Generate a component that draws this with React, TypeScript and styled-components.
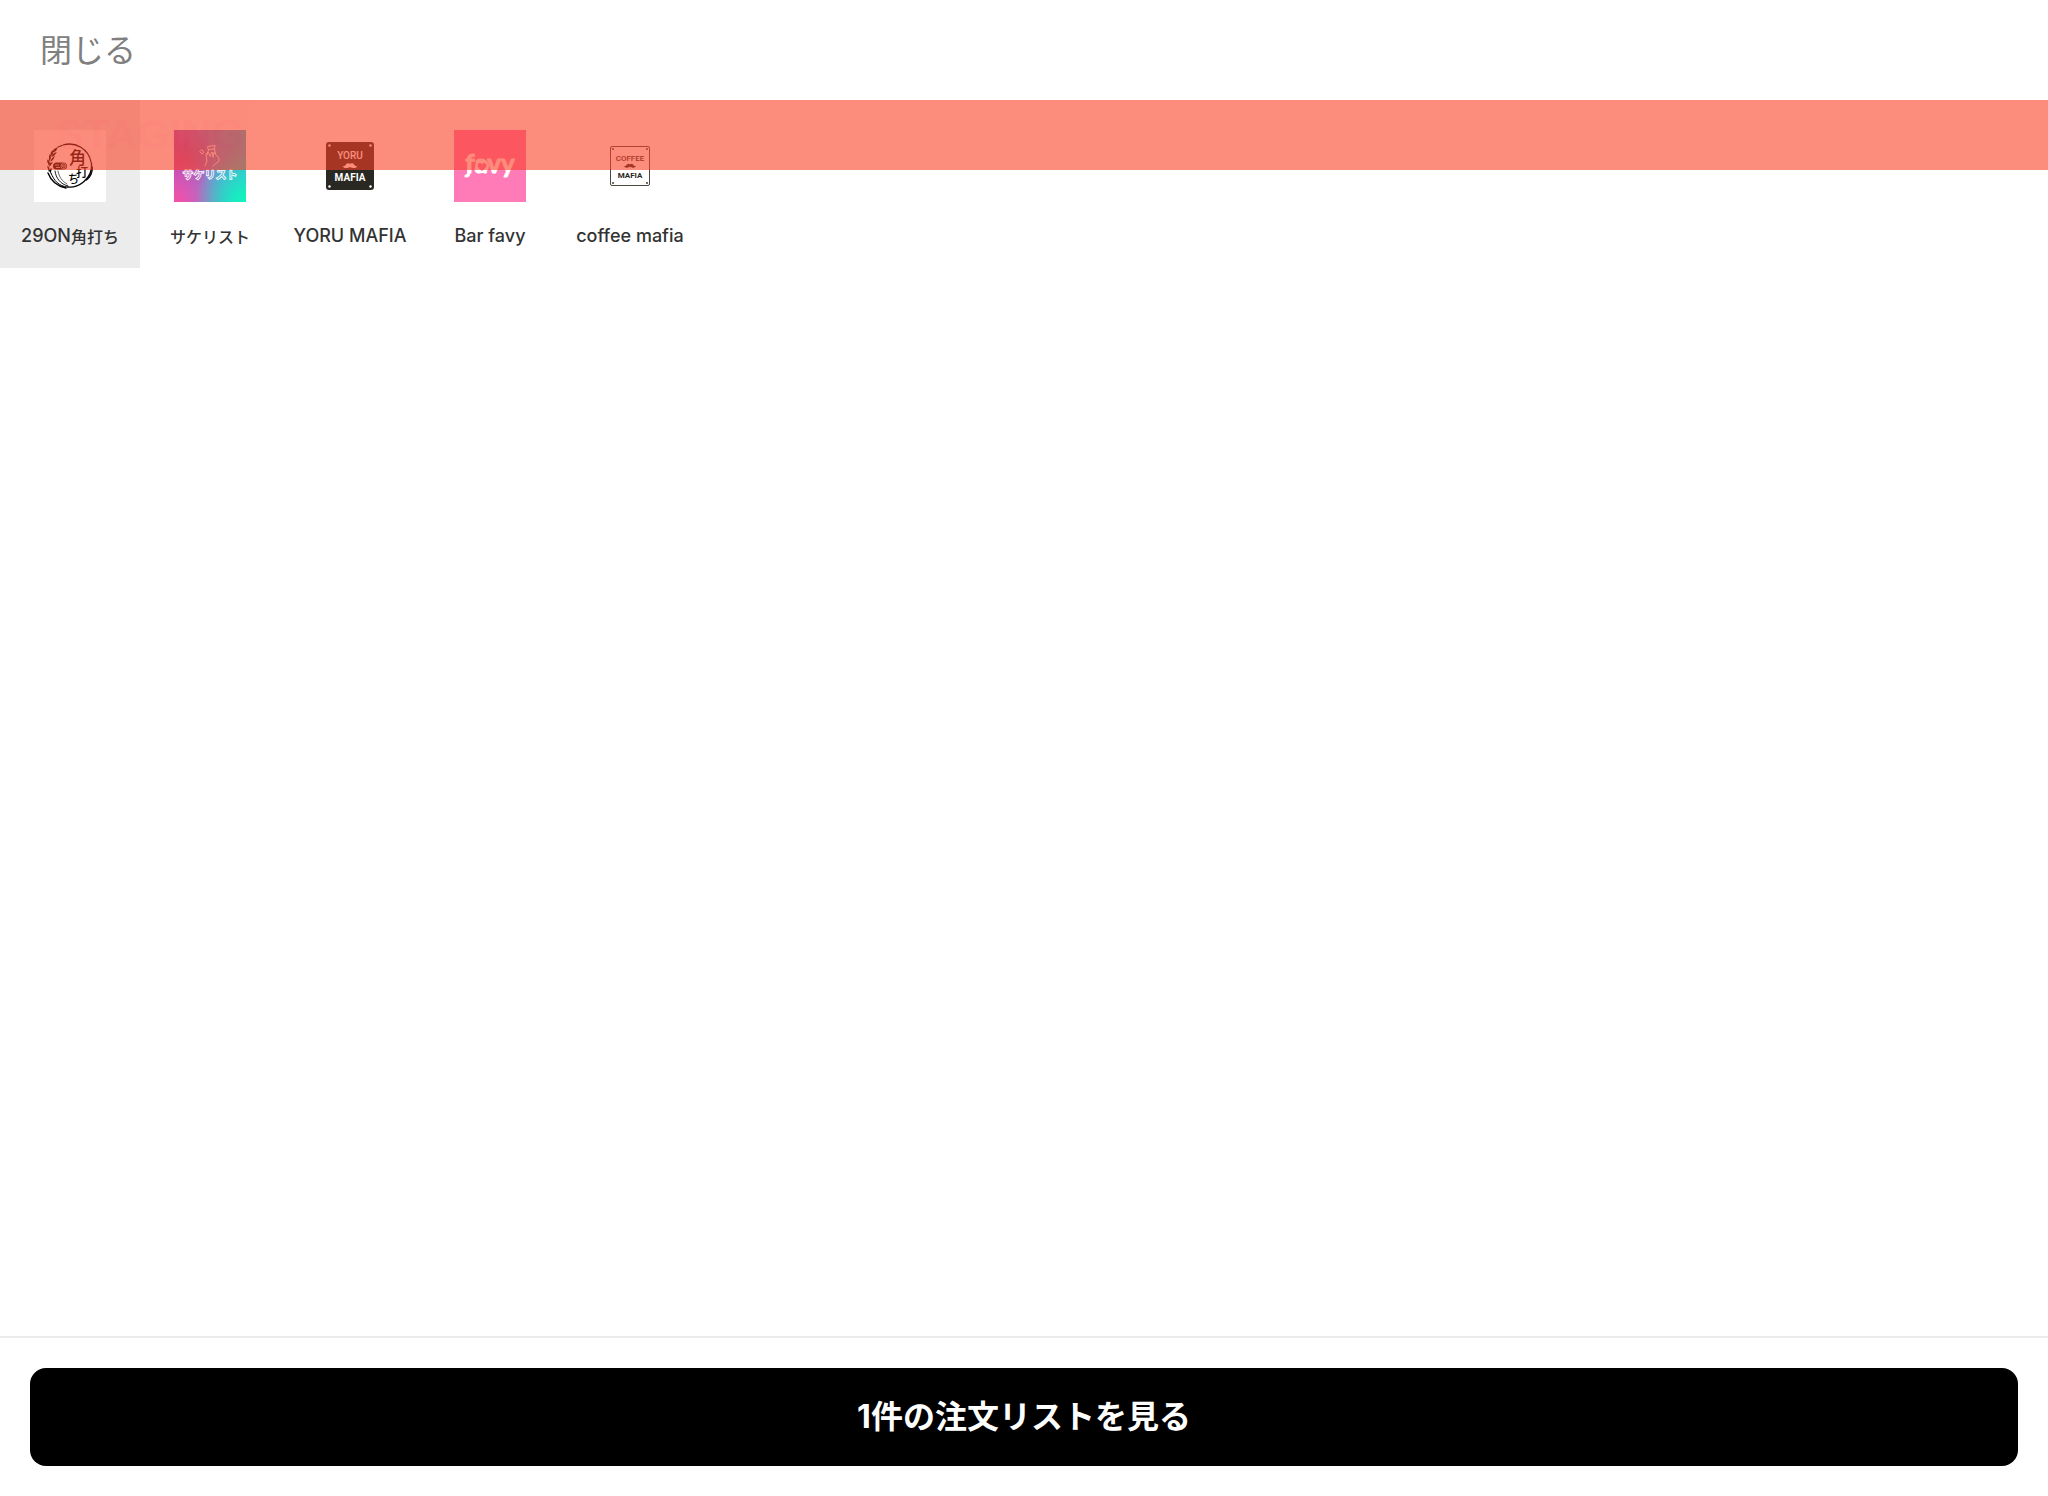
import React, { useState } from "react";
import styled, { createGlobalStyle } from "styled-components";

const jp = `"Noto Sans CJK JP"`;

const GlobalStyle = createGlobalStyle`
  *, *::before, *::after { box-sizing: border-box; }
  body {
    margin: 0;
    background: #fff;
    color: #333;
    font-family: Inter, ${jp}, sans-serif;
  }
  button { font: inherit; border: 0; cursor: pointer; }
`;

const Page = styled.div`
  display: flex;
  flex-direction: column;
  min-height: 100vh;
`;

const Header = styled.header`
  display: flex;
  align-items: center;
  height: 100px;
  padding: 2px 40px 0;
`;

const CloseButton = styled.button`
  && { font-size: 32px; font-weight: 400; }
  padding: 0;
  background: none;
  color: #808080;
  line-height: 48px;
`;

const Main = styled.main`
  position: relative;
  flex: 1;
`;

const StagingBanner = styled.div`
  position: absolute;
  inset: 0 0 auto;
  height: 70px;
  padding-left: 56px;
  background: #fa4025;
  color: #fb3a26;
  font: 700 42px/70px "Liberation Sans", sans-serif;
  opacity: 0.6;
  pointer-events: none;
`;

const ShopTabs = styled.nav`
  display: flex;
  overflow-x: auto;
`;

const ShopTab = styled.button<{ $active: boolean }>`
  display: flex;
  flex: none;
  flex-direction: column;
  align-items: center;
  gap: 22px;
  width: 140px;
  padding: 30px 0 20px;
  background: ${(p) => (p.$active ? "#ececec" : "transparent")};
  color: #333;
`;

const ShopLogo = styled.svg`
  display: block;
  width: 72px;
  height: 72px;
`;

const ShopName = styled.span`
  display: flex;
  align-items: center;
  height: 24px;
  line-height: 24px;
  white-space: nowrap;
`;

const Latin = styled.span`
  font-size: 18px;
  font-weight: 500;
`;

const Kana = styled.span`
  font-family: ${jp}, sans-serif;
  font-size: 16px;
  font-weight: 500;
`;

const Footer = styled.footer`
  padding: 30px;
  border-top: 2px solid #ececec;
`;

const OrderButton = styled.button`
  && { font-size: 32px; font-weight: 700; }
  display: block;
  width: 100%;
  padding: 25px 0;
  border-radius: 16px;
  background: #000;
  color: #fff;
  line-height: 48px;
`;

const KakuuchiLogo = () => (
  <ShopLogo viewBox="0 0 72 72" aria-hidden="true">
    <rect width="72" height="72" fill="#fff" />
    <g fill="none" stroke="#000" strokeLinecap="round">
      <path d="M29 15a22 22 0 0 1 28 17" strokeWidth="1.3" />
      <path d="M24 17l4-1.5" strokeWidth="1.2" />
      <path d="M57.500 33c1 8-2 14-8 19-5 4-11 5.500-16 5" strokeWidth="1.4" />
      <path d="M58.500 37c0 5-2 10-6 13" strokeWidth="1.2" />
      <path d="M14 43c3 8 8 13 18 15" strokeWidth="1.4" />
      <path d="M17 43c3 8 8 13 16 14" strokeWidth="1" />
      <path d="M21 41c1 7 5 13 13 15" strokeWidth="0.9" />
      <path d="M24 41c1 6 4 10 9 13" strokeWidth="0.6" />
    </g>
    <g fill="#000">
      <path d="M20 19l4-2-2 4-4 2zM17 22l2-2v4l-3 3zM20 23l3-1-3 4-3 1zM15 26l1-2 1 4-2 4zM18 28l3-2-2 4-3 2zM13 31l1-2 2 4-1 3zM16 33l3-1-2 3-2 2zM13 36l2 1 1 4-1 1zM16 39l2-1-1 4-1 2z" />
      <rect x="19" y="32.500" width="14" height="7" rx="3.500" />
    </g>
    <g fill="none" stroke="#fff" strokeWidth="0.7">
      <circle cx="29.500" cy="36" r="2.600" />
      <circle cx="29.500" cy="36" r="1" />
      <path d="M21 35h4M22 37.500h4" />
    </g>
    <g fill="#000" fontFamily='"Noto Sans CJK JP", sans-serif' fontWeight="500">
      <text x="35" y="34" fontSize="17">角</text>
      <text x="42" y="47" fontSize="12">打</text>
      <text x="34" y="53" fontSize="11">ち</text>
    </g>
  </ShopLogo>
);

const SakelistLogo = () => (
  <ShopLogo viewBox="0 0 72 72" aria-hidden="true">
    <defs>
      <linearGradient id="sake-base" x1="0" y1="0" x2="1" y2="0">
        <stop offset="0" stopColor="#a85fd8" />
        <stop offset="1" stopColor="#46b4d8" />
      </linearGradient>
      <radialGradient id="sake-pink" cx="0" cy="1" r="0.700">
        <stop offset="0" stopColor="#f84fa4" />
        <stop offset="1" stopColor="#f84fa4" stopOpacity="0" />
      </radialGradient>
      <radialGradient id="sake-rose" cx="0.100" cy="0.400" r="0.500">
        <stop offset="0" stopColor="#b83f9c" stopOpacity="0.700" />
        <stop offset="1" stopColor="#b83f9c" stopOpacity="0" />
      </radialGradient>
      <radialGradient id="sake-teal" cx="1" cy="1" r="0.700">
        <stop offset="0" stopColor="#12f4bd" />
        <stop offset="0.200" stopColor="#18ecc0" />
        <stop offset="1" stopColor="#18ecc0" stopOpacity="0" />
      </radialGradient>
    </defs>
    <rect width="72" height="72" fill="url(#sake-base)" />
    <rect width="72" height="72" fill="url(#sake-rose)" />
    <rect width="72" height="72" fill="url(#sake-pink)" />
    <rect width="72" height="72" fill="url(#sake-teal)" />
    <g fill="none" stroke="#fff" strokeWidth="0.900" strokeLinejoin="round" strokeLinecap="round">
      <path d="M28 20l2 2-2 2-2-2z" />
      <path d="M34 16.500l7-1-.5 3.500-6 .5zM34.500 19.500l-1 5M40.500 19l1 5" />
      <path d="M31 36l2-5-1-7 2-2 2 4M36 26l2-4 1 5M39 27l1-5 2 3M42 25l3 3v3l-6 5" />
    </g>
    <text
      x="36"
      y="49"
      textAnchor="middle"
      fill="none"
      stroke="#fff"
      strokeWidth="0.800"
      fontFamily='"Noto Sans CJK JP", sans-serif'
      fontSize="11"
      fontWeight="900"
    >
      サケリスト
    </text>
  </ShopLogo>
);

const moustache =
  "M0-2c-1-1-3-1-4 .5-.8 1.200-2 2-3.500 1.700C-6 2.500-2 2.500 0 1c2 1.500 6 1.500 7.500-.8C6 .5 4.800-.3 4-1.500 3-3 1-3 0-2z";

const YoruLogo = () => (
  <ShopLogo viewBox="0 0 72 72" aria-hidden="true">
    <rect x="12" y="12" width="48" height="48" rx="3" fill="#2a2822" />
    <g fill="#fff">
      {[15.5, 56.5].map((x) => [15.5, 56.5].map((y) => <circle key={`${x}-${y}`} cx={x} cy={y} r="1.200" />))}
      <path d={moustache} transform="translate(36 36)" />
      <g fontFamily="Roboto, sans-serif" textAnchor="middle">
        <text x="36" y="29" fontSize="10" fontWeight="500">YORU</text>
        <text x="36" y="51" fontSize="10" fontWeight="700">MAFIA</text>
      </g>
    </g>
  </ShopLogo>
);

const FavyLogo = () => (
  <ShopLogo viewBox="0 0 72 72" aria-hidden="true">
    <rect width="72" height="72" fill="#ff7bb8" />
    <text
      x="36"
      y="43"
      textAnchor="middle"
      fill="#fff"
      stroke="#fff"
      strokeWidth="0.800"
      strokeLinejoin="round"
      fontFamily="Lato, sans-serif"
      fontSize="26"
      fontWeight="700"
    >
      favy
    </text>
    <circle cx="28" cy="36" r="7" fill="#fff" />
    <path d="M28 41c-6-4-5-8-2-8 1 0 1.700.7 2 1.400.3-.7 1-1.400 2-1.400 3 0 4 4-2 8z" fill="#ff7bb8" />
    <path d="M15 42c0 3-1 4-3 4" fill="none" stroke="#fff" strokeWidth="3.200" strokeLinecap="round" />
  </ShopLogo>
);

const CoffeeLogo = () => (
  <ShopLogo viewBox="0 0 72 72" aria-hidden="true">
    <rect x="16.500" y="16.500" width="39" height="39" rx="1.500" fill="#fff" stroke="#4a4840" />
    <g fill="#2a2822">
      {[19, 53].map((x) => [19, 53].map((y) => <circle key={`${x}-${y}`} cx={x} cy={y} r="0.900" />))}
      <path d={moustache} transform="translate(36 36) scale(.8)" />
      <g fontFamily="Roboto, sans-serif" textAnchor="middle">
        <text x="36" y="31" fontSize="8" fontWeight="500">COFFEE</text>
        <text x="36" y="48" fontSize="8" fontWeight="700">MAFIA</text>
      </g>
    </g>
  </ShopLogo>
);

type Shop = { id: string; latin?: string; kana?: string; Logo: React.FC };

const shops: Shop[] = [
  { id: "kakuuchi", latin: "29ON", kana: "角打ち", Logo: KakuuchiLogo },
  { id: "sakelist", kana: "サケリスト", Logo: SakelistLogo },
  { id: "yoru", latin: "YORU MAFIA", Logo: YoruLogo },
  { id: "favy", latin: "Bar favy", Logo: FavyLogo },
  { id: "coffee", latin: "coffee mafia", Logo: CoffeeLogo },
];

export default function App() {
  const [active, setActive] = useState("kakuuchi");
  return (
    <Page>
      <GlobalStyle />
      <Header>
        <CloseButton type="button">閉じる</CloseButton>
      </Header>
      <Main>
        <ShopTabs>
          {shops.map(({ id, latin, kana, Logo }) => (
            <ShopTab
              key={id}
              type="button"
              $active={id === active}
              aria-pressed={id === active}
              onClick={() => setActive(id)}
            >
              <Logo />
              <ShopName>
                {latin && <Latin>{latin}</Latin>}
                {kana && <Kana>{kana}</Kana>}
              </ShopName>
            </ShopTab>
          ))}
        </ShopTabs>
        <StagingBanner>STAGING</StagingBanner>
      </Main>
      <Footer>
        <OrderButton type="button">1件の注文リストを見る</OrderButton>
      </Footer>
    </Page>
  );
}
